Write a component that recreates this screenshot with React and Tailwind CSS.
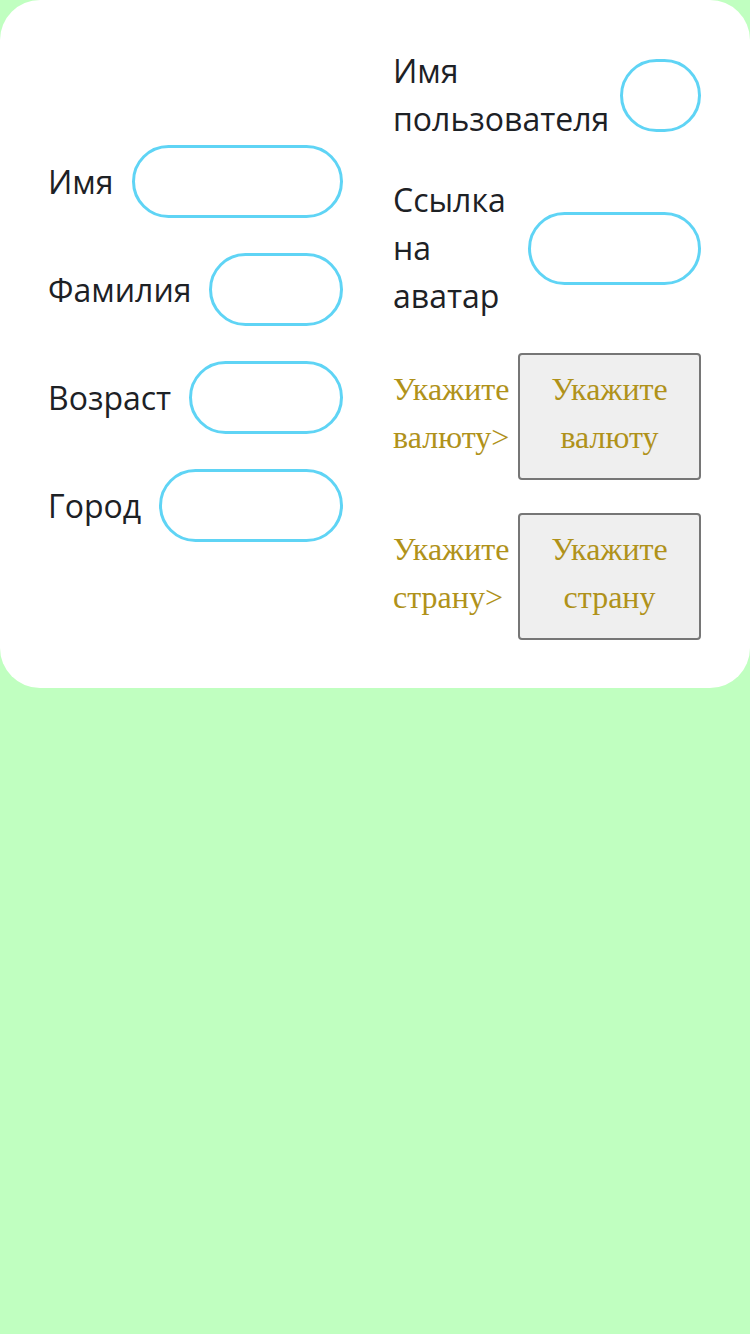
const fields = ["Имя", "Фамилия", "Возраст", "Город"];

const Field = ({ label }) => (
  <div className="flex items-center gap-[18px]">
    <span className="whitespace-nowrap">{label}</span>
    <div className="h-[73px] min-w-0 flex-1 rounded-full border-[3px] border-[#5fd4f5]" />
  </div>
);

const Picker = ({ text }) => (
  <div className="flex items-center gap-[9px] font-['Liberation_Serif',serif] text-[#b0921a]">
    <span className="w-[116px] pb-2">{text}&gt;</span>
    <div className="flex h-[127px] w-[183px] items-center justify-center rounded-[4px] border-2 border-[#767676] bg-[#efefef] px-6 pb-2 text-center">
      {text}
    </div>
  </div>
);

const App = () => {
  return (
    <div className="min-h-screen bg-[#c0ffc0]">
      <div className="flex gap-[50px] rounded-[40px] bg-white px-12 pb-12 pt-[47px] font-['Open_Sans',sans-serif] text-[32px] leading-[48px] text-[#1d2125]">
        {/* LEFT */}
        <div className="flex w-[295px] flex-col justify-center gap-[35px]">
          {fields.map((f) => (
            <Field key={f} label={f} />
          ))}
        </div>

        {/* RIGHT */}
        <div className="flex w-[308px] flex-col gap-[33px]">
          <div className="flex items-center justify-between">
            <span className="w-[209px]">Имя пользователя</span>
            <div className="h-[73px] w-[81px] rounded-full border-[3px] border-[#5fd4f5]" />
          </div>
          <div className="flex items-center justify-between">
            <span className="w-[120px]">Ссылка на аватар</span>
            <div className="h-[73px] w-[173px] rounded-full border-[3px] border-[#5fd4f5]" />
          </div>
          <Picker text="Укажите валюту" />
          <Picker text="Укажите страну" />
        </div>
      </div>
    </div>
  );
};

export default App;
